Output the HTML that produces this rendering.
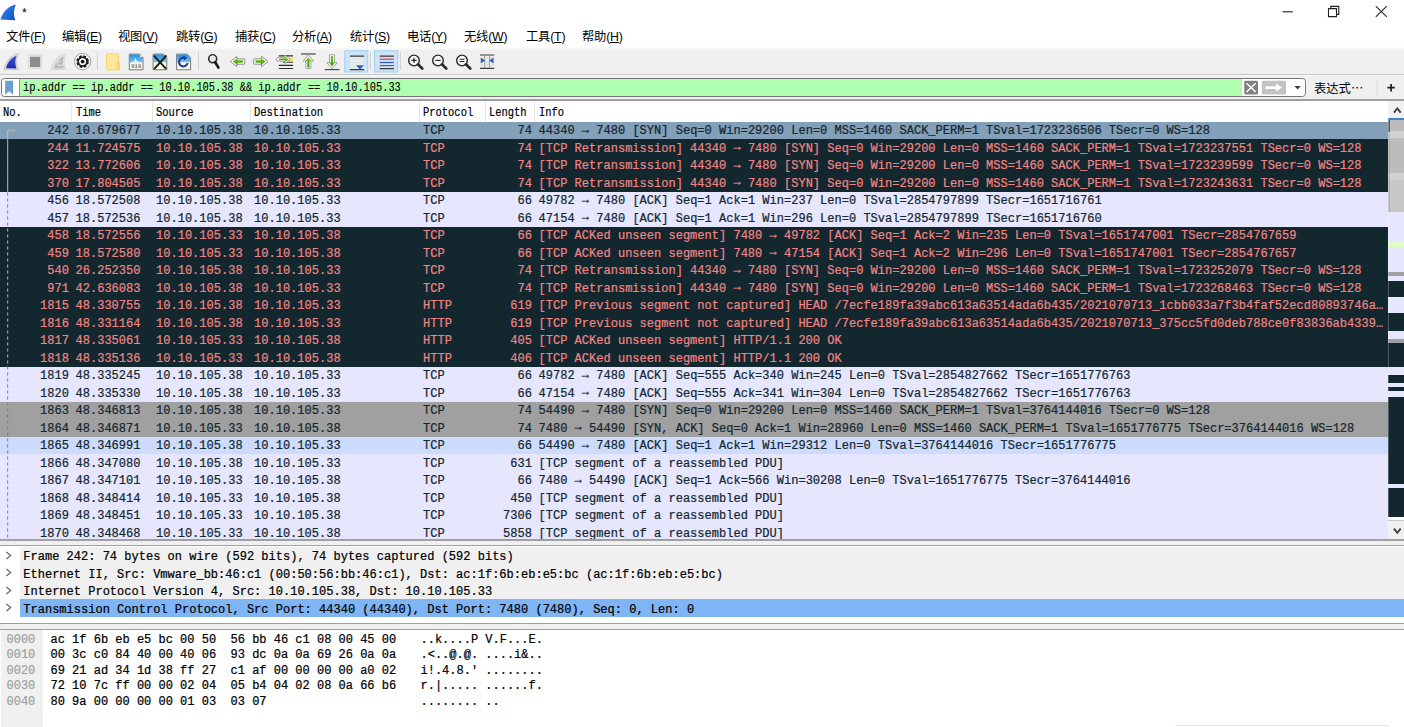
<!DOCTYPE html>
<html lang="zh-CN">
<head>
<meta charset="utf-8">
<title>*</title>
<style>
html,body{margin:0;padding:0;}
body{width:1404px;height:727px;overflow:hidden;position:relative;background:#fff;font-family:"Liberation Sans","Noto Sans CJK SC",sans-serif;font-size:12px;color:#000;}
.abs{position:absolute;}
/* title bar */
#title{position:absolute;left:0;top:0;width:1404px;height:25px;background:#fff;}
#title .t{position:absolute;left:22px;top:6px;font-size:12px;}
/* menu */
#menu{position:absolute;left:0;top:25px;width:1404px;height:23.3px;background:#fff;}
.m{position:absolute;top:4.100px;font-size:12.300px;line-height:16px;white-space:nowrap;letter-spacing:-0.2px;}
/* toolbar */
#tb{position:absolute;left:0;top:47.300px;width:1404px;height:27.200px;background:linear-gradient(#fff 0,#f0f0f0 3.500px);}
#tb2{position:absolute;left:0;top:74.500px;width:1404px;height:26px;background:linear-gradient(#f8f8f8 0,#f8f8f8 1.200px,#f0f0f0 1.300px);}
/* filter */
#flt{position:absolute;left:0.5px;top:78.2px;width:1305.5px;height:18.6px;border:1px solid #767676;border-radius:3.5px;background:#fff;box-sizing:border-box;overflow:hidden;}
#flt .g{position:absolute;left:17.200px;top:0;width:1222.300px;border-left:1px solid #9a9a9a;height:100%;background:#afffaf;}
#flt .tx{position:absolute;left:21.800px;top:2px;-webkit-text-stroke:0.120px #000;font-family:"Liberation Mono",monospace;font-size:12px;line-height:15px;white-space:pre;color:#000;transform-origin:0 0;transform:scaleX(0.860);}
/* list header */
#hdr{position:absolute;left:0;top:100.9px;width:1388.5px;height:20.9px;background:#fff;}
#hdr span{position:absolute;top:5px;-webkit-text-stroke:0.200px #000;font-family:"Liberation Mono",monospace;font-size:12px;line-height:15px;white-space:pre;transform-origin:0 0;transform:scaleX(0.871);}
#hdr i{position:absolute;top:0;width:1px;height:21px;background:#e5e5e5;}
/* rows */
#list{position:absolute;left:0;top:0;width:1388px;height:538.900px;overflow:hidden;}
.r{position:absolute;left:0;width:1388.5px;height:17.6px;font-family:"Liberation Mono",monospace;font-size:12px;line-height:17.5px;white-space:pre;letter-spacing:0.018px;}
.ar{position:relative;top:-1.400px;}
.c{position:absolute;top:1.300px;-webkit-text-stroke:0.220px currentColor;}
.no{right:1319.5px;}
.tm{left:75.5px;}
.sr{left:156px;}
.ds{left:254px;}
.pr{left:423px;}
.ln{right:856.5px;}
.inf{left:538.5px;}
.sel{background:#849fb8;color:#12272e;}
.bad{background:#12272e;color:#f08484;}
.tcp{background:#e7e6ff;color:#12272e;}
.syn{background:#a0a0a0;color:#12272e;}
.hov{background:#cddcfe;color:#12272e;}
/* details */
#det{position:absolute;left:0;top:546px;width:1404px;height:77px;background:#fff;}
.d{position:absolute;left:0;width:1404px;height:17.6px;font-family:"Liberation Mono",monospace;font-size:12px;line-height:17.5px;white-space:pre;color:#000;}
.d::before{content:"";position:absolute;left:19.600px;top:0;width:1385px;height:17.600px;background:#f0f0f0;}
.d .dt{position:absolute;left:23.300px;letter-spacing:0.012px;top:2.600px;-webkit-text-stroke:0.220px currentColor;}
.dsel::before{background:#7fb5f5;}
.chev{position:absolute;left:5.300px;top:4.300px;width:7px;height:9px;}
/* bytes */
#byt{position:absolute;left:0;top:630px;width:1404px;height:98px;background:#fff;}
#byt .gut{position:absolute;left:1px;top:0;width:41.800px;height:98px;background:#f0f0f0;}
.b{position:absolute;left:0;width:1404px;height:15.400px;font-family:"Liberation Mono",monospace;font-size:12px;line-height:15.400px;white-space:pre;color:#000;-webkit-text-stroke:0.220px currentColor;}
.bo{position:absolute;left:6.5px;color:#a0a0a0;}
.bx{position:absolute;left:50.5px;}
.ba{position:absolute;left:420.5px;}
#sb{position:absolute;left:1387.800px;top:100.900px;width:16.200px;height:438.700px;background:#e7e6ff;overflow:hidden;}
#sb i{position:absolute;left:0;width:17px;}
.hl{position:absolute;left:0;width:1404px;height:1px;}
</style>
</head>
<body>
<div id="title"><span class="t">*</span></div>
<div id="menu"><span class="m" style="left:6px">文件(<u>F</u>)</span><span class="m" style="left:62px">编辑(<u>E</u>)</span><span class="m" style="left:118px">视图(<u>V</u>)</span><span class="m" style="left:176px">跳转(<u>G</u>)</span><span class="m" style="left:235px">捕获(<u>C</u>)</span><span class="m" style="left:292px">分析(<u>A</u>)</span><span class="m" style="left:350px">统计(<u>S</u>)</span><span class="m" style="left:407px">电话(<u>Y</u>)</span><span class="m" style="left:464px">无线(<u>W</u>)</span><span class="m" style="left:526px">工具(<u>T</u>)</span><span class="m" style="left:582px">帮助(<u>H</u>)</span></div>
<div id="tb"></div>
<div id="tb2"></div>
<div class="hl" style="top:73.900px;height:1.100px;background:#c6c6c6"></div>
<svg class="abs" style="left:0;top:0" width="1404" height="100" viewBox="0 0 1404 100">
<defs>
<linearGradient id="gfin" x1="0" y1="0" x2="1" y2="1"><stop offset="0" stop-color="#3c8df0"/><stop offset="1" stop-color="#0a4fc4"/></linearGradient>
<linearGradient id="gfin2" x1="0" y1="0" x2="0" y2="1"><stop offset="0" stop-color="#3a56d8"/><stop offset="1" stop-color="#1c2fa8"/></linearGradient>
<linearGradient id="gfold" x1="0" y1="0" x2="1" y2="0"><stop offset="0" stop-color="#fbe28a"/><stop offset="1" stop-color="#f5cf5c"/></linearGradient>
<linearGradient id="gsky" x1="0" y1="0" x2="0" y2="1"><stop offset="0" stop-color="#1e8fe0"/><stop offset="1" stop-color="#7cc4f0"/></linearGradient>
<linearGradient id="ggrn" x1="0" y1="0" x2="0" y2="1"><stop offset="0" stop-color="#7ac41c"/><stop offset="1" stop-color="#3f9a08"/></linearGradient>
</defs>
<!-- title icon -->
<path d="M15.9 4.7 C8.5 5.6 3 11.5 0.3 19.6 L15.6 20.3 C13.2 15.4 13.6 9.6 15.9 4.7Z" fill="url(#gfin)"/>
<!-- window controls -->
<path d="M1282.5 11.8H1292.8" stroke="#222" stroke-width="1.1" fill="none"/>
<path d="M1328.5 8.6h8v8h-8z M1330.8 8.4v-2h8v8h-2" stroke="#222" stroke-width="1.1" fill="none"/>
<path d="M1375.8 6.2l11 10.6M1386.8 6.2l-11 10.6" stroke="#222" stroke-width="1.1" fill="none"/>
<!-- toolbar: start capture fin -->
<path d="M18.3 53.6 C10.5 55 6 61 3.9 69.5 L18.6 69.7 C16 64.5 16.2 58.6 18.3 53.6Z" fill="#dcdcdc" stroke="#c4c4c4" stroke-width="0.8"/>
<path d="M16.6 55.8 C11 57.6 7.6 62.4 6 68.3 L16.4 68.4 C14.8 64 15 59.6 16.6 55.8Z" fill="url(#gfin2)"/>
<!-- stop -->
<rect x="28.3" y="55" width="13.4" height="13.4" fill="#e4e4e4" stroke="#d0d0d0" stroke-width="0.6"/>
<rect x="30" y="56.8" width="10.2" height="10.2" fill="#8c8c8c"/>
<!-- restart (disabled) -->
<path d="M65.5 53.8 C58 55.2 53.4 61 51.2 69.4 L65.8 69.6 C63.4 64.6 63.5 58.8 65.5 53.8Z" fill="#e2e2e2" stroke="#cfcfcf" stroke-width="0.8"/>
<path d="M63.8 56.4 C58.8 58.2 55.6 62.6 54 68.2 L63.8 68.3 C62.2 64 62.4 60 63.8 56.4Z" fill="#b9b9b9"/>
<path d="M60.6 61.2a2.4 2.4 0 1 0 1.6 2.6" stroke="#f0f0f0" stroke-width="1" fill="none"/>
<!-- options -->
<circle cx="82.6" cy="61.6" r="8.2" fill="#fafafa" stroke="#8a8a8a" stroke-width="0.8"/>
<circle cx="82.6" cy="61.6" r="5" fill="none" stroke="#1a1a1a" stroke-width="2.6" stroke-dasharray="2.6 1.33"/>
<circle cx="82.6" cy="61.6" r="4.4" fill="none" stroke="#1a1a1a" stroke-width="1.6"/>
<circle cx="82.6" cy="61.6" r="1.9" fill="#111"/>
<path d="M97.4 52.5v17.5M198.5 52.5v17.5M370.5 52.5v17.5M400.4 52.5v17.5" stroke="#cfcfcf" stroke-width="1"/>
<!-- folder -->
<path d="M106.500 54.500q0-.8.800-.8h10.400q.8 0 .8.800v7.700h.4q.8 0 .8.800v6.100q0 .8-.8.800h-11.600q-.8 0-.8-.8z" fill="#fce79c" stroke="#f4cc58" stroke-width="0.800"/>
<path d="M116.700 62.400h2.200q.7 0 .7.700v6q0 .7-.7.700h-2.200z" fill="#f6d56c"/>
<!-- save -->
<g>
<path d="M129.300 54.100h10.300l3.400 3.400v12.300h-13.700z" fill="#fbf8e0" stroke="#6b6b6b" stroke-width="0.9"/>
<path d="M129.800 54.600h9.600l3.100 3.100v4.500h-12.700z" fill="url(#gsky)"/>
<path d="M131.500 62.200l3-1.200 1.200-3.600 1 3.800 4.800 1z" fill="#fff" opacity="0.9"/>
<text x="131.200" y="68.400" font-family="Liberation Mono,monospace" font-size="5.600" fill="#777" font-weight="bold">010</text>
<path d="M139.600 54.100v3.400h3.400" fill="#fff6d8" stroke="#6b6b6b" stroke-width="0.6"/>
</g>
<!-- close file -->
<g>
<path d="M153.100 54.100h10.300l3.400 3.400v12.300h-13.700z" fill="#fbf8e0" stroke="#6b6b6b" stroke-width="0.9"/>
<path d="M153.600 54.600h9.600l3.100 3.100v4.500h-12.700z" fill="url(#gsky)"/>
<path d="M154.300 56.200l11.400 12.200M165.900 56l-11.400 12.600" stroke="#1a1a1a" stroke-width="1.900" stroke-linecap="round"/>
</g>
<!-- reload -->
<g>
<path d="M176.600 54.100h10.600l3.400 3.400v12.300h-14z" fill="#fbf8e0" stroke="#6b6b6b" stroke-width="0.9"/>
<path d="M177.100 54.600h9.900l3.100 3.100v4.500h-13z" fill="url(#gsky)"/>
<path d="M187.600 62.800a4.300 4.300 0 1 1-2.600-4.700" fill="none" stroke="#1c3a9c" stroke-width="2"/>
<path d="M183.200 55.600l4.200 2.300-3.600 2.700z" fill="#1c3a9c"/>
</g>
<!-- find -->
<circle cx="212.700" cy="58.800" r="4" fill="#e6e6e6" stroke="#2a2a2a" stroke-width="1.600"/>
<path d="M211 56.800a2.600 2.600 0 0 1 3-.6" stroke="#fff" stroke-width="1" fill="none"/>
<path d="M215.200 62.200l3.200 5.400" stroke="#1a1a1a" stroke-width="2.700" stroke-linecap="round"/>
<!-- back -->
<path d="M230.400 61.500l6.400-5.100v2.400h7.200q.8 0 .8.800v3.800q0 .8-.8.800h-7.200v2.400z" fill="#fff" stroke="#8e8e8e" stroke-width="1" stroke-linejoin="round"/>
<path d="M232.800 61.500l4.800-3.500v2.200h5.300v2.600h-5.300v2.200z" fill="url(#ggrn)"/>
<!-- forward -->
<path d="M268 61.500l-6.400-5.100v2.400h-7.200q-.8 0-.8.800v3.800q0 .8.800.8h7.200v2.400z" fill="#fff" stroke="#8e8e8e" stroke-width="1" stroke-linejoin="round"/>
<path d="M265.600 61.500l-4.800-3.500v2.200h-5.300v2.600h5.300v2.200z" fill="url(#ggrn)"/>
<!-- goto -->
<path d="M278.800 55.800h14.300M278.800 65.400h14.300M278.800 68.500h14.300" stroke="#2e2e2e" stroke-width="1.200"/>
<path d="M283 62.200h10.100" stroke="#2e2e2e" stroke-width="1"/>
<rect x="288.500" y="57.800" width="4.600" height="3" fill="#f5e04a"/>
<path d="M290.200 59.400l-5.400-4.300v2.500h-7q-1.500 0-1.500 1.800t1.500 1.800h7v2.500z" fill="#fff" stroke="#8c8c8c" stroke-width="0.8" stroke-linejoin="round"/>
<path d="M288.400 59.400l-3.600-2.600v1.700h-5.600v1.800h5.600v1.700z" fill="url(#ggrn)"/>
<!-- first -->
<path d="M301 54h14.800" stroke="#3a3a3a" stroke-width="1.100"/>
<path d="M308.400 54.800l5.200 6.200h-2.700v7.600h-5v-7.600h-2.700z" fill="#fff" stroke="#9a9a9a" stroke-width="0.9" stroke-linejoin="round"/>
<path d="M308.400 57.200l3 3.900h-1.900v6.300h-2.200v-6.300h-1.900z" fill="url(#ggrn)"/>
<!-- last -->
<path d="M324.800 69.600h14.700" stroke="#3a3a3a" stroke-width="1.100"/>
<path d="M332 68.800l5.200-6.200h-2.700v-7.800h-5v7.800h-2.700z" fill="#fff" stroke="#9a9a9a" stroke-width="0.900" stroke-linejoin="round"/>
<path d="M332 66.400l3-3.900h-1.900v-6.500h-2.200v6.500h-1.900z" fill="url(#ggrn)"/>
<!-- autoscroll (checked) -->
<rect x="344.800" y="50.800" width="23" height="21.200" fill="#cce4f7" stroke="#99ccf4" stroke-width="0.900"/>
<path d="M350 56.100h14M350 69.600h14" stroke="#3a3a3a" stroke-width="1.200"/>
<path d="M350 59.200h14M350 62.500h14M350 65.600h6" stroke="#c9c9c0" stroke-width="1"/>
<rect x="350" y="57" width="14" height="11.800" fill="#f4f4ec" opacity="0.600"/>
<path d="M356 65.200h8l-4 4.200z" fill="#2f5fc0"/>
<!-- colorize (checked) -->
<rect x="374.600" y="50.800" width="23.200" height="21.200" fill="#cce4f7" stroke="#99ccf4" stroke-width="0.900"/>
<path d="M379.700 56.100h14.200M379.700 68.700h14.200" stroke="#3a3a3a" stroke-width="1.200"/>
<path d="M379.700 59.200h14.200" stroke="#e8383c" stroke-width="1.200"/>
<path d="M379.700 62.500h14.200" stroke="#3456b4" stroke-width="1.200"/>
<path d="M379.700 65.600h14.200" stroke="#7a4a8c" stroke-width="1.200"/>
<!-- zoom in/out/reset -->
<g fill="none" stroke="#2a2a2a">
<circle cx="414" cy="60.400" r="5.300" fill="#fafafa" stroke-width="1.450"/>
<path d="M417.900 64.300l4.400 4.200" stroke-width="2.600" stroke-linecap="round"/>
<path d="M411.300 60.400h5.400M414 57.700v5.400" stroke-width="1.200"/>
<circle cx="438" cy="60.400" r="5.300" fill="#fafafa" stroke-width="1.450"/>
<path d="M441.900 64.300l4.400 4.200" stroke-width="2.600" stroke-linecap="round"/>
<path d="M435.300 60.400h5.400" stroke-width="1.200"/>
<circle cx="462" cy="60.400" r="5.300" fill="#fafafa" stroke-width="1.450"/>
<path d="M465.900 64.300l4.400 4.200" stroke-width="2.600" stroke-linecap="round"/>
<path d="M459.500 59.300h5M459.500 61.500h5" stroke-width="1.100"/>
</g>
<!-- resize columns -->
<path d="M480 55h14.200M480 68.400h14.200" stroke="#3a3a3a" stroke-width="1.200"/>
<path d="M484.700 55v13.400M489.500 55v13.400" stroke="#8a8a80" stroke-width="0.900"/>
<path d="M480 58.400h14.200M480 61.700h14.200M480 65h14.200" stroke="#cfcfc6" stroke-width="0.800"/>
<path d="M480.800 57.400l4.200 3-4.200 3zM493.500 57.400l-4.200 3 4.200 3z" fill="#2f5fc0"/>
</svg>

<div id="flt"><div class="g"></div><span class="tx">ip.addr == ip.addr == 10.10.105.38 &amp;&amp; ip.addr == 10.10.105.33</span></div>
<svg class="abs" style="left:0;top:76px" width="1404" height="24" viewBox="0 76 1404 24">
<!-- bookmark -->
<path d="M5.100 80.800h8v14l-4-3.600-4 3.600z" fill="#6b9fd6"/>
<!-- clear -->
<rect x="1244.200" y="80.800" width="13.800" height="13.600" rx="1.500" fill="#808080"/>
<path d="M1246.600 83.200l9 8.800M1255.600 83.200l-9 8.800" stroke="#fff" stroke-width="1.500"/>
<!-- apply -->
<rect x="1261.800" y="80.800" width="24.200" height="13.600" rx="1.500" fill="#c3c3c3"/>
<path d="M1265.500 86.200h10.500v-2.600l6 4-6 4v-2.600h-10.500z" fill="#fff"/>
<!-- dropdown -->
<path d="M1294.400 86l3.200 3.400 3.200-3.400z" fill="#3c3c3c"/>
<path d="M1377.200 80.500v15" stroke="#d4d4d4" stroke-width="1"/>
<path d="M1387.400 87.700h7.400M1391.100 84v7.400" stroke="#222" stroke-width="1.750"/>
</svg>

<span class="abs" style="left:1314px;top:79.5px;font-size:12.300px;line-height:16px;white-space:nowrap">表达式<span style="font-family:'Noto Sans CJK SC',sans-serif">…</span></span>
<div class="hl" style="top:99.4px;height:1.5px;background:#a0a0a0"></div>
<div id="list">
<div id="hdr"><span style="left:3px">No.</span><span style="left:76px">Time</span><span style="left:156px">Source</span><span style="left:254px">Destination</span><span style="left:423px">Protocol</span><span style="left:489px">Length</span><span style="left:538.5px">Info</span>
<i style="left:71px"></i><i style="left:152px"></i><i style="left:250px"></i><i style="left:419px"></i><i style="left:485px"></i><i style="left:534px"></i></div>
<div class="r sel" style="top:121.80px"><span class="c no">242</span><span class="c tm">10.679677</span><span class="c sr">10.10.105.38</span><span class="c ds">10.10.105.33</span><span class="c pr">TCP</span><span class="c ln">74</span><span class="c inf">44340 <span class="ar">→</span> 7480 [SYN] Seq=0 Win=29200 Len=0 MSS=1460 SACK_PERM=1 TSval=1723236506 TSecr=0 WS=128</span></div>
<div class="r bad" style="top:139.30px"><span class="c no">244</span><span class="c tm">11.724575</span><span class="c sr">10.10.105.38</span><span class="c ds">10.10.105.33</span><span class="c pr">TCP</span><span class="c ln">74</span><span class="c inf">[TCP Retransmission] 44340 <span class="ar">→</span> 7480 [SYN] Seq=0 Win=29200 Len=0 MSS=1460 SACK_PERM=1 TSval=1723237551 TSecr=0 WS=128</span></div>
<div class="r bad" style="top:156.80px"><span class="c no">322</span><span class="c tm">13.772606</span><span class="c sr">10.10.105.38</span><span class="c ds">10.10.105.33</span><span class="c pr">TCP</span><span class="c ln">74</span><span class="c inf">[TCP Retransmission] 44340 <span class="ar">→</span> 7480 [SYN] Seq=0 Win=29200 Len=0 MSS=1460 SACK_PERM=1 TSval=1723239599 TSecr=0 WS=128</span></div>
<div class="r bad" style="top:174.30px"><span class="c no">370</span><span class="c tm">17.804505</span><span class="c sr">10.10.105.38</span><span class="c ds">10.10.105.33</span><span class="c pr">TCP</span><span class="c ln">74</span><span class="c inf">[TCP Retransmission] 44340 <span class="ar">→</span> 7480 [SYN] Seq=0 Win=29200 Len=0 MSS=1460 SACK_PERM=1 TSval=1723243631 TSecr=0 WS=128</span></div>
<div class="r tcp" style="top:191.80px"><span class="c no">456</span><span class="c tm">18.572508</span><span class="c sr">10.10.105.38</span><span class="c ds">10.10.105.33</span><span class="c pr">TCP</span><span class="c ln">66</span><span class="c inf">49782 <span class="ar">→</span> 7480 [ACK] Seq=1 Ack=1 Win=237 Len=0 TSval=2854797899 TSecr=1651716761</span></div>
<div class="r tcp" style="top:209.30px"><span class="c no">457</span><span class="c tm">18.572536</span><span class="c sr">10.10.105.38</span><span class="c ds">10.10.105.33</span><span class="c pr">TCP</span><span class="c ln">66</span><span class="c inf">47154 <span class="ar">→</span> 7480 [ACK] Seq=1 Ack=1 Win=296 Len=0 TSval=2854797899 TSecr=1651716760</span></div>
<div class="r bad" style="top:226.80px"><span class="c no">458</span><span class="c tm">18.572556</span><span class="c sr">10.10.105.33</span><span class="c ds">10.10.105.38</span><span class="c pr">TCP</span><span class="c ln">66</span><span class="c inf">[TCP ACKed unseen segment] 7480 <span class="ar">→</span> 49782 [ACK] Seq=1 Ack=2 Win=235 Len=0 TSval=1651747001 TSecr=2854767659</span></div>
<div class="r bad" style="top:244.30px"><span class="c no">459</span><span class="c tm">18.572580</span><span class="c sr">10.10.105.33</span><span class="c ds">10.10.105.38</span><span class="c pr">TCP</span><span class="c ln">66</span><span class="c inf">[TCP ACKed unseen segment] 7480 <span class="ar">→</span> 47154 [ACK] Seq=1 Ack=2 Win=296 Len=0 TSval=1651747001 TSecr=2854767657</span></div>
<div class="r bad" style="top:261.80px"><span class="c no">540</span><span class="c tm">26.252350</span><span class="c sr">10.10.105.38</span><span class="c ds">10.10.105.33</span><span class="c pr">TCP</span><span class="c ln">74</span><span class="c inf">[TCP Retransmission] 44340 <span class="ar">→</span> 7480 [SYN] Seq=0 Win=29200 Len=0 MSS=1460 SACK_PERM=1 TSval=1723252079 TSecr=0 WS=128</span></div>
<div class="r bad" style="top:279.30px"><span class="c no">971</span><span class="c tm">42.636083</span><span class="c sr">10.10.105.38</span><span class="c ds">10.10.105.33</span><span class="c pr">TCP</span><span class="c ln">74</span><span class="c inf">[TCP Retransmission] 44340 <span class="ar">→</span> 7480 [SYN] Seq=0 Win=29200 Len=0 MSS=1460 SACK_PERM=1 TSval=1723268463 TSecr=0 WS=128</span></div>
<div class="r bad" style="top:296.80px"><span class="c no">1815</span><span class="c tm">48.330755</span><span class="c sr">10.10.105.38</span><span class="c ds">10.10.105.33</span><span class="c pr">HTTP</span><span class="c ln">619</span><span class="c inf">[TCP Previous segment not captured] HEAD /7ecfe189fa39abc613a63514ada6b435/2021070713_1cbb033a7f3b4faf52ecd80893746a…</span></div>
<div class="r bad" style="top:314.30px"><span class="c no">1816</span><span class="c tm">48.331164</span><span class="c sr">10.10.105.38</span><span class="c ds">10.10.105.33</span><span class="c pr">HTTP</span><span class="c ln">619</span><span class="c inf">[TCP Previous segment not captured] HEAD /7ecfe189fa39abc613a63514ada6b435/2021070713_375cc5fd0deb788ce0f83836ab4339…</span></div>
<div class="r bad" style="top:331.80px"><span class="c no">1817</span><span class="c tm">48.335061</span><span class="c sr">10.10.105.33</span><span class="c ds">10.10.105.38</span><span class="c pr">HTTP</span><span class="c ln">405</span><span class="c inf">[TCP ACKed unseen segment] HTTP/1.1 200 OK</span></div>
<div class="r bad" style="top:349.30px"><span class="c no">1818</span><span class="c tm">48.335136</span><span class="c sr">10.10.105.33</span><span class="c ds">10.10.105.38</span><span class="c pr">HTTP</span><span class="c ln">406</span><span class="c inf">[TCP ACKed unseen segment] HTTP/1.1 200 OK</span></div>
<div class="r tcp" style="top:366.80px"><span class="c no">1819</span><span class="c tm">48.335245</span><span class="c sr">10.10.105.38</span><span class="c ds">10.10.105.33</span><span class="c pr">TCP</span><span class="c ln">66</span><span class="c inf">49782 <span class="ar">→</span> 7480 [ACK] Seq=555 Ack=340 Win=245 Len=0 TSval=2854827662 TSecr=1651776763</span></div>
<div class="r tcp" style="top:384.30px"><span class="c no">1820</span><span class="c tm">48.335330</span><span class="c sr">10.10.105.38</span><span class="c ds">10.10.105.33</span><span class="c pr">TCP</span><span class="c ln">66</span><span class="c inf">47154 <span class="ar">→</span> 7480 [ACK] Seq=555 Ack=341 Win=304 Len=0 TSval=2854827662 TSecr=1651776763</span></div>
<div class="r syn" style="top:401.80px"><span class="c no">1863</span><span class="c tm">48.346813</span><span class="c sr">10.10.105.38</span><span class="c ds">10.10.105.33</span><span class="c pr">TCP</span><span class="c ln">74</span><span class="c inf">54490 <span class="ar">→</span> 7480 [SYN] Seq=0 Win=29200 Len=0 MSS=1460 SACK_PERM=1 TSval=3764144016 TSecr=0 WS=128</span></div>
<div class="r syn" style="top:419.30px"><span class="c no">1864</span><span class="c tm">48.346871</span><span class="c sr">10.10.105.33</span><span class="c ds">10.10.105.38</span><span class="c pr">TCP</span><span class="c ln">74</span><span class="c inf">7480 <span class="ar">→</span> 54490 [SYN, ACK] Seq=0 Ack=1 Win=28960 Len=0 MSS=1460 SACK_PERM=1 TSval=1651776775 TSecr=3764144016 WS=128</span></div>
<div class="r hov" style="top:436.80px"><span class="c no">1865</span><span class="c tm">48.346991</span><span class="c sr">10.10.105.38</span><span class="c ds">10.10.105.33</span><span class="c pr">TCP</span><span class="c ln">66</span><span class="c inf">54490 <span class="ar">→</span> 7480 [ACK] Seq=1 Ack=1 Win=29312 Len=0 TSval=3764144016 TSecr=1651776775</span></div>
<div class="r tcp" style="top:454.30px"><span class="c no">1866</span><span class="c tm">48.347080</span><span class="c sr">10.10.105.38</span><span class="c ds">10.10.105.33</span><span class="c pr">TCP</span><span class="c ln">631</span><span class="c inf">[TCP segment of a reassembled PDU]</span></div>
<div class="r tcp" style="top:471.80px"><span class="c no">1867</span><span class="c tm">48.347101</span><span class="c sr">10.10.105.33</span><span class="c ds">10.10.105.38</span><span class="c pr">TCP</span><span class="c ln">66</span><span class="c inf">7480 <span class="ar">→</span> 54490 [ACK] Seq=1 Ack=566 Win=30208 Len=0 TSval=1651776775 TSecr=3764144016</span></div>
<div class="r tcp" style="top:489.30px"><span class="c no">1868</span><span class="c tm">48.348414</span><span class="c sr">10.10.105.33</span><span class="c ds">10.10.105.38</span><span class="c pr">TCP</span><span class="c ln">450</span><span class="c inf">[TCP segment of a reassembled PDU]</span></div>
<div class="r tcp" style="top:506.80px"><span class="c no">1869</span><span class="c tm">48.348451</span><span class="c sr">10.10.105.33</span><span class="c ds">10.10.105.38</span><span class="c pr">TCP</span><span class="c ln">7306</span><span class="c inf">[TCP segment of a reassembled PDU]</span></div>
<div class="r tcp" style="top:524.30px"><span class="c no">1870</span><span class="c tm">48.348468</span><span class="c sr">10.10.105.33</span><span class="c ds">10.10.105.38</span><span class="c pr">TCP</span><span class="c ln">5858</span><span class="c inf">[TCP segment of a reassembled PDU]</span></div>
<svg class="abs" style="left:0;top:0" width="20" height="539" viewBox="0 0 20 539"><path d="M7 130.300H15" stroke="#b4bcc6" stroke-width="1.200"/><path d="M7.600 130.300V139.3" stroke="#aeb8c4" stroke-width="1.250"/><path d="M7.600 139.3V156.8" stroke="#bf9292" stroke-width="1.250"/><path d="M7.600 156.8V174.3" stroke="#bf9292" stroke-width="1.250"/><path d="M7.600 174.3V191.8" stroke="#bf9292" stroke-width="1.250"/><path d="M7.600 191.8V209.3" stroke="#8a9098" stroke-width="1.250" stroke-dasharray="3 3" stroke-dashoffset="5.40"/><path d="M7.600 209.3V226.8" stroke="#8a9098" stroke-width="1.250" stroke-dasharray="3 3" stroke-dashoffset="4.90"/><path d="M7.600 226.8V244.3" stroke="#bf9292" stroke-width="1.250" stroke-dasharray="3 3" stroke-dashoffset="4.40"/><path d="M7.600 244.3V261.8" stroke="#bf9292" stroke-width="1.250" stroke-dasharray="3 3" stroke-dashoffset="3.90"/><path d="M7.600 261.8V279.3" stroke="#bf9292" stroke-width="1.250" stroke-dasharray="3 3" stroke-dashoffset="3.40"/><path d="M7.600 279.3V296.8" stroke="#bf9292" stroke-width="1.250" stroke-dasharray="3 3" stroke-dashoffset="2.90"/><path d="M7.600 296.8V314.3" stroke="#bf9292" stroke-width="1.250" stroke-dasharray="3 3" stroke-dashoffset="2.40"/><path d="M7.600 314.3V331.8" stroke="#bf9292" stroke-width="1.250" stroke-dasharray="3 3" stroke-dashoffset="1.90"/><path d="M7.600 331.8V349.3" stroke="#bf9292" stroke-width="1.250" stroke-dasharray="3 3" stroke-dashoffset="1.40"/><path d="M7.600 349.3V366.8" stroke="#bf9292" stroke-width="1.250" stroke-dasharray="3 3" stroke-dashoffset="0.90"/><path d="M7.600 366.8V384.3" stroke="#8a9098" stroke-width="1.250" stroke-dasharray="3 3" stroke-dashoffset="0.40"/><path d="M7.600 384.3V401.8" stroke="#8a9098" stroke-width="1.250" stroke-dasharray="3 3" stroke-dashoffset="5.90"/><path d="M7.600 401.8V419.3" stroke="#76828c" stroke-width="1.250" stroke-dasharray="3 3" stroke-dashoffset="5.40"/><path d="M7.600 419.3V436.8" stroke="#76828c" stroke-width="1.250" stroke-dasharray="3 3" stroke-dashoffset="4.90"/><path d="M7.600 436.8V454.3" stroke="#8a9098" stroke-width="1.250" stroke-dasharray="3 3" stroke-dashoffset="4.40"/><path d="M7.600 454.3V471.8" stroke="#8a9098" stroke-width="1.250" stroke-dasharray="3 3" stroke-dashoffset="3.90"/><path d="M7.600 471.8V489.3" stroke="#8a9098" stroke-width="1.250" stroke-dasharray="3 3" stroke-dashoffset="3.40"/><path d="M7.600 489.3V506.8" stroke="#8a9098" stroke-width="1.250" stroke-dasharray="3 3" stroke-dashoffset="2.90"/><path d="M7.600 506.8V524.3" stroke="#8a9098" stroke-width="1.250" stroke-dasharray="3 3" stroke-dashoffset="2.40"/><path d="M7.600 524.3V541.8" stroke="#8a9098" stroke-width="1.250" stroke-dasharray="3 3" stroke-dashoffset="1.90"/></svg>
</div>
<div id="sb">
<i style="top:0.0px;height:17.05px;background:#f0f0f0"></i>
<i style="top:17.0px;height:1.95px;background:#3f84c8"></i>
<i style="top:18.9px;height:11.25px;background:#bcbcbc"></i>
<i style="top:30.1px;height:6.65px;background:#d2d2d2"></i>
<i style="top:36.7px;height:35.45px;background:#bcbcbc"></i>
<i style="top:72.1px;height:6.75px;background:#d2d2d2"></i>
<i style="top:78.8px;height:32.25px;background:#c8c8c8"></i>
<i style="top:111.0px;height:30.65px;background:#e7e6ff"></i>
<i style="top:141.6px;height:5.05px;background:#e2fcc8"></i>
<i style="top:146.6px;height:24.35px;background:#e7e6ff"></i>
<i style="top:170.9px;height:4.25px;background:#a0a0a0"></i>
<i style="top:175.1px;height:5.05px;background:#e7e6ff"></i>
<i style="top:180.1px;height:15.65px;background:#12272e"></i>
<i style="top:195.7px;height:16.45px;background:#e7e6ff"></i>
<i style="top:212.1px;height:17.65px;background:#12272e"></i>
<i style="top:229.7px;height:8.35px;background:#e7e6ff"></i>
<i style="top:238.0px;height:4.15px;background:#a0a0a0"></i>
<i style="top:242.1px;height:23.75px;background:#12272e"></i>
<i style="top:265.8px;height:8.35px;background:#e7e6ff"></i>
<i style="top:274.1px;height:8.05px;background:#12272e"></i>
<i style="top:282.1px;height:4.05px;background:#e7e6ff"></i>
<i style="top:286.1px;height:4.55px;background:#12272e"></i>
<i style="top:290.6px;height:5.55px;background:#e7e6ff"></i>
<i style="top:296.1px;height:86.75px;background:#12272e"></i>
<i style="top:382.8px;height:4.65px;background:#e7e6ff"></i>
<i style="top:387.4px;height:29.05px;background:#12272e"></i>
<i style="top:416.4px;height:3.15px;background:#fafafa"></i>
<i style="top:419.5px;height:1.05px;background:#c4c4c4"></i>
<i style="top:420.5px;height:18.25px;background:#f0f0f0"></i>
<svg style="position:absolute;left:0;top:0" width="17" height="440" viewBox="0 0 17 440"><path d="M5.900 11.700l3.400-4.200 3.400 4.200M5.900 427.600l3.400 4.200 3.400-4.200" fill="none" stroke="#404040" stroke-width="1.900"/><path d="M0.400 0V440" stroke="#ffffff" stroke-opacity="0.300" stroke-width="0.900"/><path d="M1.200 19v12" stroke="#3a4a52" stroke-width="1.300"/><path d="M1.200 31v80" stroke="#a8a8a8" stroke-width="1"/></svg>
</div>
<div class="hl" style="top:538.800px;height:0.600px;background:#d8d8e0"></div><div class="hl" style="top:539.300px;height:1.300px;background:#a0a0a4"></div>
<div class="hl" style="top:540.600px;height:4.400px;background:#f0f0f0"></div>
<div class="hl" style="top:545.300px;height:1.300px;background:#a0a0a4"></div>
<div id="det"></div>
<div class="d" style="top:546.50px"><svg class="chev" viewBox="0 0 7 9"><path d="M1.400 0.900L5.700 4.500L1.400 8.100" fill="none" stroke="#6a6a6a" stroke-width="1.300"/></svg><span class="dt">Frame 242: 74 bytes on wire (592 bits), 74 bytes captured (592 bits)</span></div>
<div class="d" style="top:564.00px"><svg class="chev" viewBox="0 0 7 9"><path d="M1.400 0.900L5.700 4.500L1.400 8.100" fill="none" stroke="#6a6a6a" stroke-width="1.300"/></svg><span class="dt">Ethernet II, Src: Vmware_bb:46:c1 (00:50:56:bb:46:c1), Dst: ac:1f:6b:eb:e5:bc (ac:1f:6b:eb:e5:bc)</span></div>
<div class="d" style="top:581.50px"><svg class="chev" viewBox="0 0 7 9"><path d="M1.400 0.900L5.700 4.500L1.400 8.100" fill="none" stroke="#6a6a6a" stroke-width="1.300"/></svg><span class="dt">Internet Protocol Version 4, Src: 10.10.105.38, Dst: 10.10.105.33</span></div>
<div class="d dsel" style="top:599.00px"><svg class="chev" viewBox="0 0 7 9"><path d="M1.400 0.900L5.700 4.500L1.400 8.100" fill="none" stroke="#6a6a6a" stroke-width="1.300"/></svg><span class="dt">Transmission Control Protocol, Src Port: 44340 (44340), Dst Port: 7480 (7480), Seq: 0, Len: 0</span></div>
<div class="hl" style="top:622.700px;height:1.300px;background:#a0a0a4"></div>
<div class="hl" style="top:624px;height:4.800px;background:#f0f0f0"></div>
<div class="hl" style="top:628.800px;height:1.300px;background:#a0a0a4"></div>
<div id="byt"><div class="gut"></div></div>
<div class="b" style="top:632.90px"><span class="bo">0000</span><span class="bx">ac 1f 6b eb e5 bc 00 50  56 bb 46 c1 08 00 45 00</span><span class="ba">..k....P V.F...E.</span></div>
<div class="b" style="top:648.30px"><span class="bo">0010</span><span class="bx">00 3c c0 84 40 00 40 06  93 dc 0a 0a 69 26 0a 0a</span><span class="ba">.&lt;..@.@. ....i&amp;..</span></div>
<div class="b" style="top:663.70px"><span class="bo">0020</span><span class="bx">69 21 ad 34 1d 38 ff 27  c1 af 00 00 00 00 a0 02</span><span class="ba">i!.4.8.&#x27; ........</span></div>
<div class="b" style="top:679.10px"><span class="bo">0030</span><span class="bx">72 10 7c ff 00 00 02 04  05 b4 04 02 08 0a 66 b6</span><span class="ba">r.|..... ......f.</span></div>
<div class="b" style="top:694.50px"><span class="bo">0040</span><span class="bx">80 9a 00 00 00 00 01 03  03 07</span><span class="ba">........ ..</span></div>
<div class="abs" style="left:1174.500px;top:724.800px;width:214px;height:6px;border:1.200px solid #e3e3e3;border-radius:4px;box-sizing:border-box;background:#fdfdfd"></div>
</body>
</html>
